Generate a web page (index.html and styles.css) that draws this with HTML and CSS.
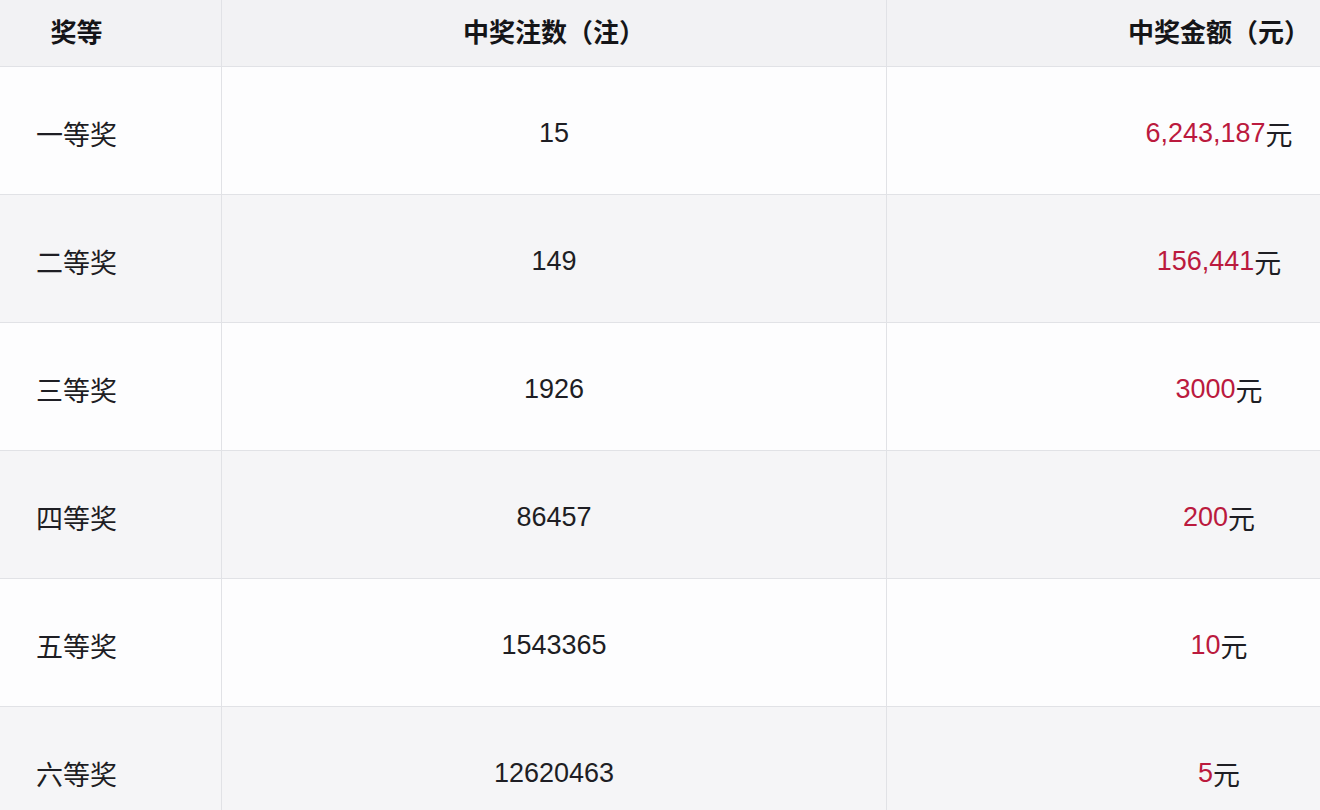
FILE: index.html
```html
<!DOCTYPE html>
<html lang="zh">
<head>
<meta charset="utf-8">
<title>中奖结果</title>
<link rel="stylesheet" href="styles.css">
</head>
<body>
<div class="prize-table">
  <div class="cell head c1">奖等</div>
  <div class="cell head c2">中奖注数（注）</div>
  <div class="cell head c3">中奖金额（元）</div>

  <div class="cell odd c1">一等奖</div>
  <div class="cell odd c2">15</div>
  <div class="cell odd c3"><span class="amt">6,243,187</span>元</div>

  <div class="cell even c1">二等奖</div>
  <div class="cell even c2">149</div>
  <div class="cell even c3"><span class="amt">156,441</span>元</div>

  <div class="cell odd c1">三等奖</div>
  <div class="cell odd c2">1926</div>
  <div class="cell odd c3"><span class="amt">3000</span>元</div>

  <div class="cell even c1">四等奖</div>
  <div class="cell even c2">86457</div>
  <div class="cell even c3"><span class="amt">200</span>元</div>

  <div class="cell odd c1">五等奖</div>
  <div class="cell odd c2">1543365</div>
  <div class="cell odd c3"><span class="amt">10</span>元</div>

  <div class="cell even c1">六等奖</div>
  <div class="cell even c2">12620463</div>
  <div class="cell even c3"><span class="amt">5</span>元</div>
</div>
</body>
</html>
```

FILE: styles.css
```css
html, body {
  margin: 0;
  padding: 0;
  background: #fdfdfe;
}

body {
  font-family: "Liberation Sans", "Noto Sans CJK SC", sans-serif;
  color: #1e1e24;
  overflow: hidden;
}

.prize-table {
  display: grid;
  grid-template-columns: 222px 665px 433px;
  grid-template-rows: 67px repeat(6, 128px);
  width: 1320px;
}

.cell {
  box-sizing: border-box;
  display: flex;
  align-items: center;
  justify-content: center;
  border-bottom: 1px solid #e1e2e6;
  border-right: 1px solid #e1e2e6;
  font-size: 27px;
  white-space: nowrap;
  padding-top: 6px;
}

.head {
  background: #f2f2f4;
  font-weight: bold;
  font-size: 26px;
  color: #151518;
  padding-top: 0;
  padding-bottom: 6px;
}

.odd {
  background: #fdfdfe;
}

.even {
  background: #f5f5f7;
}

.c1 {
  padding-right: 68px;
}

.c3 {
  padding-left: 231px;
  border-right: none;
}

.amt {
  color: #bb1a3e;
}
```
